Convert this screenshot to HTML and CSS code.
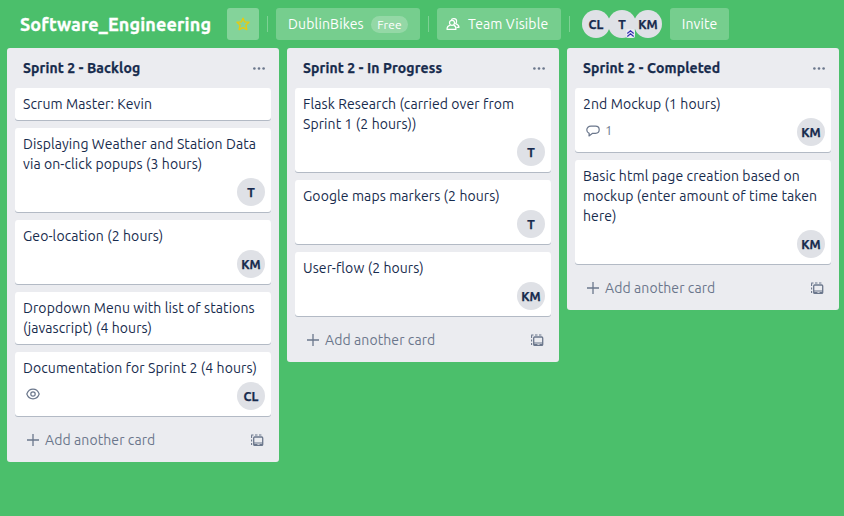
FILE: index.html
```html
<!DOCTYPE html>
<html lang="en">
<head>
<meta charset="utf-8">
<title>Software_Engineering</title>
<link rel="stylesheet" href="styles.css">
</head>
<body>
<svg class="defs" width="0" height="0">
  <symbol id="template" viewBox="0 0 14 14"><path d="M1.6 12V10M1.6 8.5V6.5M1.6 5V2.6M1.2 2H3.5M5 2H7.5M9 2H11.4" fill="none" stroke="currentColor" stroke-width="1.1"/><rect x="3.7" y="4" width="9" height="8.4" rx="1" fill="none" stroke="currentColor" stroke-width="1.3"/><path d="M4 10H12.4M4 11.6H7.4M9.6 11.6H12.4" fill="none" stroke="currentColor" stroke-width="1.1"/></symbol>
  <symbol id="plus" viewBox="0 0 12 12"><path d="M6 0V12M0 6H12" fill="none" stroke="currentColor" stroke-width="1.3"/></symbol>
  <symbol id="dots" viewBox="0 0 12 3"><circle cx="1.4" cy="1.5" r="1.3"/><circle cx="6" cy="1.5" r="1.3"/><circle cx="10.6" cy="1.5" r="1.3"/></symbol>
</svg>
<header class="bar">
  <h1 class="board-name">Software_Engineering</h1>
  <a class="btn star"><svg width="14" height="14" viewBox="0 0 14 14"><path d="M7 1.2L8.7 4.9L13 5.2L9.9 8.1L10.8 12.6L7 10.6L3.2 12.6L4.1 8.1L1 5.2L5.3 4.9Z" fill="none" stroke="#e6cb10" stroke-width="1.4" stroke-linejoin="round"/></svg></a>
  <i class="divider"></i>
  <a class="btn org"><span>DublinBikes</span><span class="pill">Free</span></a>
  <i class="divider"></i>
  <a class="btn team"><svg width="14" height="14" viewBox="0 0 14 14" fill="none" stroke="#fff" stroke-width="1.2" stroke-linejoin="round"><circle cx="6" cy="5.8" r="2.5"/><path d="M4.5 8.2C2.3 8.7 1 10 1 12.3H10C10 10.2 9.2 8.7 7.5 8.2"/><path d="M5.4 3.3C5.6 .9 10.5 .8 10.6 3.9C10.6 5.2 10.2 6 9.6 6.6C11.6 7.2 12.9 8.2 13 10.4H10.4"/></svg><span>Team Visible</span></a>
  <i class="divider"></i>
  <div class="members"><span class="avatar">CL</span><span class="avatar admin">T<svg class="badge" width="9" height="9" viewBox="0 0 9 9"><rect width="9" height="9" rx="2" fill="#e9eaf2"/><path d="M1.3 4.5L4.5 1.8L7.7 4.5M1.3 7.5L4.5 4.8L7.7 7.5" fill="none" stroke="#342eb0" stroke-width="1.2"/></svg></span><span class="avatar">KM</span></div>
  <a class="btn invite"><span>Invite</span></a>
</header>
<main class="board">
  <section class="list">
    <div class="list-head"><h2>Sprint 2 - Backlog</h2><svg class="menu" width="12" height="3"><use href="#dots"/></svg></div>
    <article class="card"><p class="title">Scrum Master: Kevin</p></article>
    <article class="card"><p class="title">Displaying Weather and Station Data<br>via on-click popups (3 hours)</p><div class="meta"><span class="avatar">T</span></div></article>
    <article class="card"><p class="title">Geo-location (2 hours)</p><div class="meta"><span class="avatar">KM</span></div></article>
    <article class="card"><p class="title">Dropdown Menu with list of stations<br>(javascript) (4 hours)</p></article>
    <article class="card"><p class="title">Documentation for Sprint 2 (4 hours)</p><div class="meta"><svg class="watch" width="14" height="12" viewBox="0 0 14 12" fill="none" stroke="#6b778c"><path d="M.8 6C2 2.8 4.3 1.2 7 1.2S12 2.8 13.2 6C12 9.2 9.7 10.8 7 10.8S2 9.2 .8 6Z" stroke-width="1.2"/><circle cx="7" cy="6" r="2.2" stroke-width="1.2"/></svg><span class="avatar">CL</span></div></article>
    <div class="add"><svg width="12" height="12"><use href="#plus"/></svg><span>Add another card</span><svg class="tpl" width="14" height="14"><use href="#template"/></svg></div>
  </section>
  <section class="list">
    <div class="list-head"><h2>Sprint 2 - In Progress</h2><svg class="menu" width="12" height="3"><use href="#dots"/></svg></div>
    <article class="card"><p class="title">Flask Research (carried over from<br>Sprint 1 (2 hours))</p><div class="meta"><span class="avatar">T</span></div></article>
    <article class="card"><p class="title">Google maps markers (2 hours)</p><div class="meta"><span class="avatar">T</span></div></article>
    <article class="card"><p class="title">User-flow (2 hours)</p><div class="meta"><span class="avatar">KM</span></div></article>
    <div class="add"><svg width="12" height="12"><use href="#plus"/></svg><span>Add another card</span><svg class="tpl" width="14" height="14"><use href="#template"/></svg></div>
  </section>
  <section class="list">
    <div class="list-head"><h2>Sprint 2 - Completed</h2><svg class="menu" width="12" height="3"><use href="#dots"/></svg></div>
    <article class="card"><p class="title">2nd Mockup (1 hours)</p><div class="meta"><svg class="comment" width="14" height="12" viewBox="0 0 14 12" fill="none" stroke="#6b778c" stroke-width="1.2" stroke-linejoin="round"><path d="M3 10.9L3.2 8.4C1.6 7.7 .8 6.6 .8 5C.8 2.6 2.5 1.2 5 1.2H9.5C11.8 1.2 13.2 2.6 13.2 4.8S11.8 8.3 9.5 8.3H6.6Z"/></svg><span class="count">1</span><span class="avatar">KM</span></div></article>
    <article class="card"><p class="title">Basic html page creation based on<br>mockup (enter amount of time taken<br>here)</p><div class="meta"><span class="avatar">KM</span></div></article>
    <div class="add"><svg width="12" height="12"><use href="#plus"/></svg><span>Add another card</span><svg class="tpl" width="14" height="14"><use href="#template"/></svg></div>
  </section>
</main>
</body>
</html>
```
FILE: styles.css
```css
* { box-sizing: border-box; }
body {
  margin: 0;
  height: 516px;
  overflow: hidden;
  background: #4bbf6b;
  color: #172b4d;
  font: 14px/20px "Ubuntu", "Noto Sans", sans-serif;
  letter-spacing: 0.09px;
}
h1, h2, p { margin: 0; }
svg { flex: none; }
.defs { display: block; }
.bar { display: flex; height: 48px; align-items: center; padding-left: 20px; color: #fff; }
.board-name { width: 207px; font-size: 18px; line-height: 32px; letter-spacing: 0.14px; white-space: nowrap; -webkit-text-stroke: 0.3px; }
.btn {
  display: flex; align-items: center; height: 32px; border-radius: 3px;
  background: rgba(255, 255, 255, .24); white-space: nowrap;
}
.star { width: 32px; justify-content: center; background: rgba(255, 255, 255, .32); }
.divider { width: 1px; height: 16px; margin: 0 8px; background: rgba(255, 255, 255, .28); }
.org { width: 144px; padding-left: 12px; justify-content: space-between; padding-right: 12px; letter-spacing: 0.16px; }
.pill { width: 37px; height: 17px; border-radius: 9px; background: rgba(255, 255, 255, .22); font-size: 12px; line-height: 17px; text-align: center; }
.team { width: 124px; padding-left: 9px; gap: 8px; }
.members { display: flex; width: 88px; margin-left: 4px; margin-right: 1px; }
.members .avatar { margin-right: -2px; }
.avatar {
  position: relative; flex: none; width: 28px; height: 28px; border-radius: 50%;
  background: #dfe1e6; color: #172b4d; font-size: 12.5px; font-weight: 700;
  line-height: 29px; text-align: center; letter-spacing: 0;
  -webkit-text-stroke: 0.25px;
}
.badge { position: absolute; right: 1px; bottom: 0; }
.admin { z-index: 1; }
.invite { width: 59px; justify-content: center; margin-left: -1px; }
.board { display: flex; align-items: flex-start; gap: 8px; padding-left: 7px; }
.list { flex: none; width: 272px; padding: 0 8px 6px; border-radius: 3px; background: #ebecf0; }
.list-head { display: flex; align-items: center; justify-content: space-between; height: 40px; padding: 0 6px 0 8px; }
h2 { font-size: 14px; line-height: 20px; letter-spacing: 0.12px; white-space: nowrap; -webkit-text-stroke: 0.25px; }
.menu { fill: #6b778c; }
.card {
  margin-bottom: 8px; padding: 6px 6px 2px 8px; border-radius: 3px;
  background: #fff; box-shadow: 0 1px 0 #b3bac5;
}
.title { margin-bottom: 4px; white-space: nowrap; }
.meta { display: flex; height: 32px; padding-left: 3px; color: #6b778c; }
.meta .avatar { margin-left: auto; }
.watch { margin-top: 6px; }
.comment { margin-top: 7px; }
.count { margin: 2px 0 0 5px; font-size: 13px; }
.add { display: flex; align-items: center; height: 32px; padding: 0 7px 0 12px; color: #6b778c; }
.add span { margin-left: 6px; }
.tpl { margin-left: auto; }
```
